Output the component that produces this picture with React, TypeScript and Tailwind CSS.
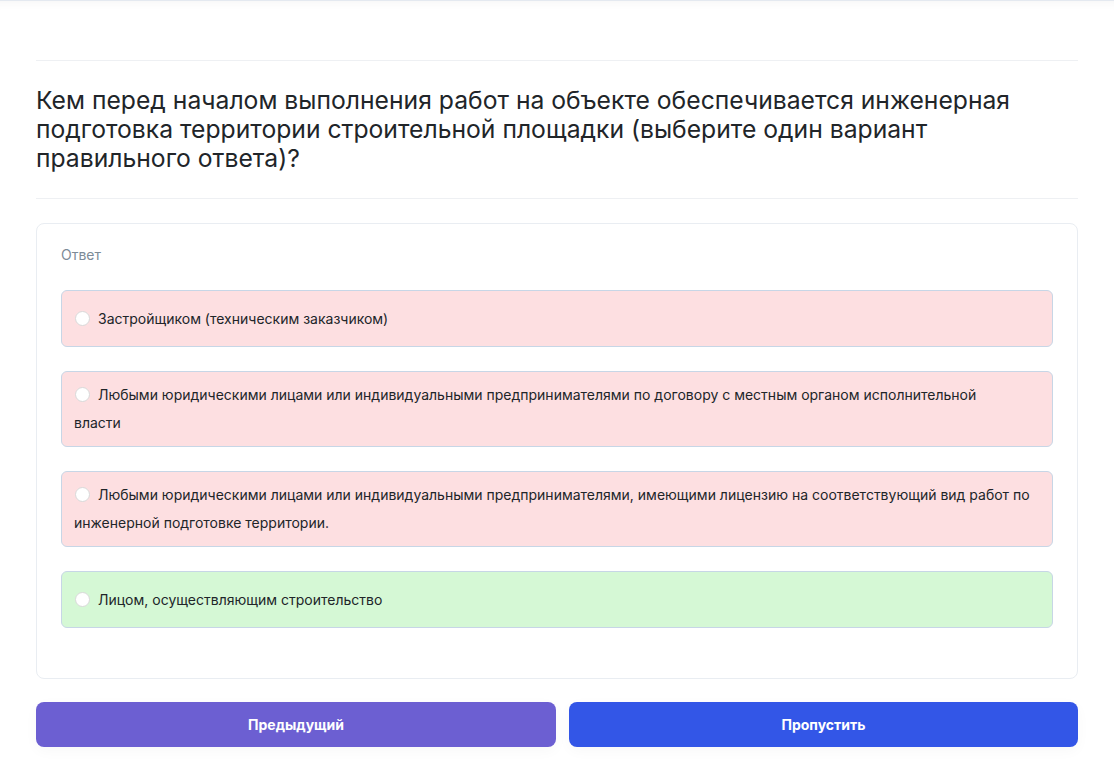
import React from "react";

const answers = [
  { id: 1, text: "Застройщиком (техническим заказчиком)", correct: false },
  {
    id: 2,
    text: "Любыми юридическими лицами или индивидуальными предпринимателями по договору с местным органом исполнительной\nвласти",
    correct: false,
  },
  {
    id: 3,
    text: "Любыми юридическими лицами или индивидуальными предпринимателями, имеющими лицензию на соответствующий вид работ по инженерной подготовке территории.",
    correct: false,
  },
  { id: 4, text: "Лицом, осуществляющим строительство", correct: true },
];

const App = () => {
  return (
    <div
      className="min-h-screen bg-white border-t border-[#e4e9f0] shadow-[inset_0_10px_10px_-8px_rgba(0,0,0,0.04)] rounded-br-xl"
      style={{ fontFamily: "Inter, 'Noto Sans', sans-serif" }}
    >
      <div className="px-[36px] pt-[59px]">
        <div className="border-t border-[#eef0f3]" />
        <h1 className="py-[25px] text-[24.7px] leading-[29px] text-[#212529] font-normal pr-[40px]">
          Кем перед началом выполнения работ на объекте обеспечивается инженерная
          подготовка территории строительной площадки (выберите один вариант
          правильного ответа)?
        </h1>
        <div className="border-t border-[#eef0f3]" />

        <div className="mt-[24px] border border-[#e9edf2] rounded-lg px-[24px] pt-[21px] pb-[50px]">
          <div className="text-[14px] leading-[20px] text-[#7d8b97] mb-[25px]">
            Ответ
          </div>
          <div className="flex flex-col gap-[24px]">
            {answers.map((a) => (
              <label
                key={a.id}
                className={`min-h-[57px] flex items-center px-[12px] py-[9px] rounded-md border border-[#c7d6e6] cursor-pointer ${
                  a.correct ? "bg-[#d5f8d5]" : "bg-[#fddfe1]"
                }`}
              >
                <span className="text-[14px] leading-[28px] text-[#212529] whitespace-pre-line">
                  <span className="inline-block w-[15px] h-[15px] rounded-full bg-white border border-[#d9d9d9] align-[-2px] ml-[1px] mr-[8px]" />
                  {a.text}
                </span>
              </label>
            ))}
          </div>
        </div>

        <div className="mt-[23px] flex gap-[13px]">
          <button className="w-[520px] h-[45px] rounded-lg bg-[#6c5fd2] text-white text-[14px] font-bold shadow-[0_4px_14px_rgba(0,0,0,0.03)]">
            Предыдущий
          </button>
          <button className="flex-1 h-[45px] rounded-lg bg-[#3356e7] text-white text-[14px] font-bold shadow-[0_4px_14px_rgba(0,0,0,0.03)]">
            Пропустить
          </button>
        </div>
      </div>
    </div>
  );
};

export default App;
